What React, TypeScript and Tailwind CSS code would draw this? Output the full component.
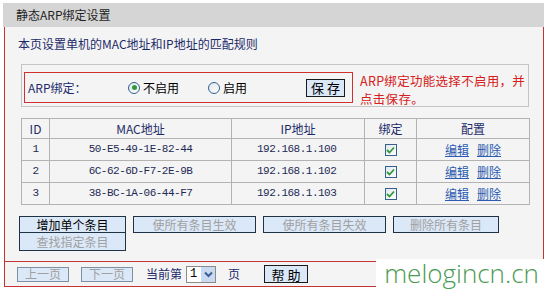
const rows = [
  { id: "1", mac: "50-E5-49-1E-82-44", ip: "192.168.1.100" },
  { id: "2", mac: "6C-62-6D-F7-2E-9B", ip: "192.168.1.102" },
  { id: "3", mac: "38-BC-1A-06-44-F7", ip: "192.168.1.103" },
]

function Radio({ checked }: { checked?: boolean }) {
  return (
    <span className="inline-flex items-center justify-center w-[12px] h-[12px] rounded-full border border-[#35608f] bg-gradient-to-br from-[#dfe6ec] to-white">
      {checked && <span className="w-[5px] h-[5px] rounded-full bg-[#2f9a3a]" />}
    </span>
  )
}

function Check() {
  return (
    <span className="inline-flex items-center justify-center w-[12px] h-[12px] border border-[#35608f] bg-gradient-to-br from-[#e2e8ee] to-white">
      <svg width="9" height="8" viewBox="0 0 9 8">
        <path d="M1 4 L3.5 6.5 L8 1.5" fill="none" stroke="#2f9a3a" strokeWidth="1.8" />
      </svg>
    </span>
  )
}

function Btn({ label, off, w }: { label: string; off?: boolean; w: string }) {
  return (
    <div
      className={`${w} h-[17px] flex items-center justify-center border border-[#1f3347] bg-[#dbe8f8] text-[12px] leading-none ${
        off ? "text-[#a0a0a0]" : "text-black"
      }`}
    >
      {label}
    </div>
  )
}

export default function App() {
  return (
    <div className="relative w-[547px] h-[290px] bg-white overflow-hidden font-['SimSun','Noto_Sans_CJK_SC',sans-serif] text-[12px]">
      {/* Header */}
      <div className="mt-[3px] ml-[3px] w-[541px] h-[24px] bg-[#d5d5d5] flex items-center pl-[13px] text-[#1f1f1f]">
        静态ARP绑定设置
      </div>

      {/* Body */}
      <div className="ml-[4px] w-[540px] h-[234px] border-x border-[#c53434] bg-[#f4f4f4] pt-[9px]">
        <div className="pl-[13px] leading-[16px] text-[#1d2a6a]">本页设置单机的MAC地址和IP地址的匹配规则</div>

        {/* ARP binding */}
        <div className="mt-[12px] ml-[16px] w-[508px] h-[43px] border border-[#c4c4c4] pt-[7px] pl-[2px] flex gap-[7px]">
          <div className="w-[329px] h-[31px] border border-[#d03030] flex items-center text-[#1d2a6a]">
            <span className="ml-[3px] w-[100px]">ARP绑定：</span>
            <span className="flex items-center gap-[3px] w-[80px]">
              <Radio checked />
              <span className="text-black">不启用</span>
            </span>
            <span className="flex items-center gap-[3px] w-[98px]">
              <Radio />
              <span className="text-black">启用</span>
            </span>
            <div className="w-[39px] h-[18px] flex items-center justify-center border border-[#1a1a1a] bg-[#dbe8f8] text-[13px] leading-none text-black">
              保 存
            </div>
          </div>
          <div className="flex flex-col text-[#d42020] text-[12.5px] leading-[18px] tracking-[0.3px]">
            <span>ARP绑定功能选择不启用，并</span>
            <span>点击保存。</span>
          </div>
        </div>

        {/* Table */}
        <table className="mt-[11px] ml-[16px] w-[508px] border-collapse border border-[#c0c0c0] table-fixed text-[#1d2a55]">
          <colgroup>
            <col className="w-[28px]" />
            <col className="w-[182px]" />
            <col className="w-[133px]" />
            <col className="w-[52px]" />
            <col className="w-[113px]" />
          </colgroup>
          <thead>
            <tr className="h-[20px] text-[#1d2a6a]">
              <th className="border border-[#b3b3b3] font-normal">ID</th>
              <th className="border border-[#b3b3b3] font-normal">MAC地址</th>
              <th className="border border-[#b3b3b3] font-normal">IP地址</th>
              <th className="border border-[#b3b3b3] font-normal">绑定</th>
              <th className="border border-[#b3b3b3] font-normal">配置</th>
            </tr>
          </thead>
          <tbody>
            {rows.map((r) => (
              <tr key={r.id} className="h-[22px] font-['Liberation_Mono',monospace] text-[11px] tracking-[-0.5px]">
                <td className="border border-[#b3b3b3] text-center">{r.id}</td>
                <td className="border border-[#b3b3b3] text-center">{r.mac}</td>
                <td className="border border-[#b3b3b3] pl-[25px]">{r.ip}</td>
                <td className="border border-[#b3b3b3]">
                  <div className="flex justify-center">
                    <Check />
                  </div>
                </td>
                <td className="border border-[#b3b3b3]">
                  <div className="flex justify-center gap-[8px] text-[#2a5bb0] underline text-[12px] tracking-normal font-['SimSun','Noto_Sans_CJK_SC',sans-serif]">
                    <span>编辑</span>
                    <span>删除</span>
                  </div>
                </td>
              </tr>
            ))}
          </tbody>
        </table>

        {/* Action buttons */}
        <div className="mt-[11px] ml-[14px] flex gap-[7px]">
          <div className="flex flex-col">
            <Btn label="增加单个条目" w="w-[107px]" />
            <div className="h-[18px] w-[107px] flex items-center justify-center border border-t-0 border-[#1f3347] bg-[#dbe8f8] text-[12px] leading-none text-[#a0a0a0]">
              查找指定条目
            </div>
          </div>
          <Btn label="使所有条目生效" off w="w-[123px]" />
          <Btn label="使所有条目失效" off w="w-[123px]" />
          <Btn label="删除所有条目" off w="w-[106px]" />
        </div>
      </div>

      {/* Bottom bar */}
      <div className="ml-[4px] w-[540px] h-[26px] border-y border-l border-[#c53434] bg-[#f4f4f4] flex items-center pl-[12px]">
        <div className="w-[52px] h-[15px] flex items-center justify-center border border-[#7c8fa3] bg-[#dbe8f8] text-[#a0a0a0] text-[12px] leading-none">
          上一页
        </div>
        <div className="ml-[12px] w-[52px] h-[15px] flex items-center justify-center border border-[#7c8fa3] bg-[#dbe8f8] text-[#a0a0a0] text-[12px] leading-none">
          下一页
        </div>
        <span className="ml-[13px] text-[#1d2a6a]">当前第</span>
        <div className="ml-[4px] w-[30px] h-[17px] flex items-center border border-[#8a8a8a] bg-white">
          <span className="pl-[3px] text-[12px] text-black flex-1 font-['Liberation_Mono',monospace]">1</span>
          <span className="w-[14px] h-[15px] bg-[#c9d9ef] flex items-center justify-center">
            <svg width="9" height="7" viewBox="0 0 9 7">
              <path d="M1 1.5 L4.5 5 L8 1.5" fill="none" stroke="#3b5f9a" strokeWidth="2" />
            </svg>
          </span>
        </div>
        <span className="ml-[12px] text-[#1d2a6a]">页</span>
        <div className="ml-[24px] w-[44px] h-[18px] flex items-center justify-center border border-[#1a1a1a] bg-[#dbe8f8] text-[13px] leading-none text-black">
          帮 助
        </div>
      </div>

      {/* Watermark */}
      <div className="absolute left-[376px] top-[259px] w-[171px] h-[31px] bg-white flex items-start justify-center">
        <span className="-mt-[5px] text-[#4a9a52] text-[26px] leading-normal font-['Open_Sans',sans-serif] font-light">
          melogincn.cn
        </span>
      </div>
    </div>
  )
}
